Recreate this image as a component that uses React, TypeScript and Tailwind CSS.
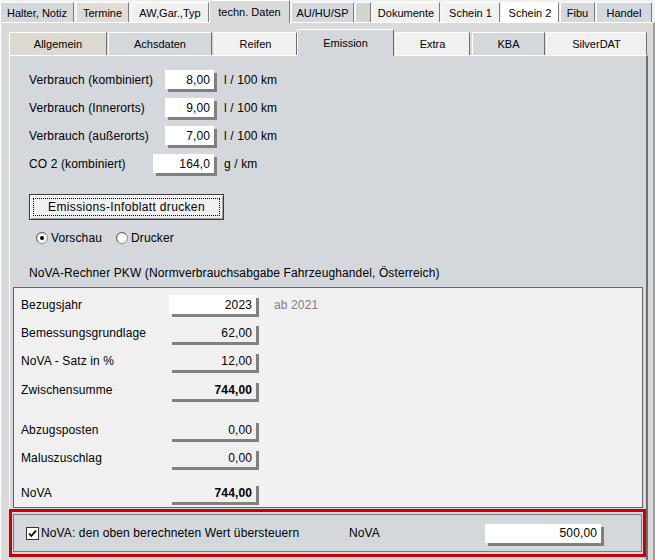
import React from 'react';

type TabDef = { label: string; cls: string; active?: boolean };

const topTabs: TabDef[] = [
  { label: 'Halter, Notiz', cls: 'w-[74px] bg-[#d4d8dc]' },
  { label: 'Termine', cls: 'ml-[2px] w-[53px] bg-[#e2ddd4]' },
  { label: 'AW,Gar.,Typ', cls: 'ml-[2px] w-[78px] bg-[#f0f0f0]' },
  { label: 'techn. Daten', cls: 'w-[81px] bg-[#dadada]', active: true },
  { label: 'AU/HU/SP', cls: 'ml-[1px] w-[63px] bg-[#d4d8dc]' },
  { label: '', cls: 'ml-[1px] w-[16px] bg-[#ced6ce]' },
  { label: 'Dokumente', cls: 'ml-[1px] w-[68px] bg-[#f0f0f0]' },
  { label: 'Schein 1', cls: 'ml-[1px] w-[59px] bg-[#f0f0f0]' },
  { label: 'Schein 2', cls: 'ml-[1px] w-[58px] bg-white' },
  { label: 'Fibu', cls: 'ml-[1px] w-[35px] bg-[#d4d8dc]' },
  { label: 'Handel', cls: 'ml-[1px] w-[56px] bg-[#d4d8dc]' },
];

const innerTabs: TabDef[] = [
  { label: 'Allgemein', cls: 'w-[98px] bg-[#ddd9d1]' },
  { label: 'Achsdaten', cls: 'ml-[1px] w-[104px] bg-[#d4d8dc]' },
  { label: 'Reifen', cls: 'ml-[2px] w-[83px] bg-[#f0f0f0]' },
  { label: 'Emission', cls: 'w-[97px] bg-[#d4d8dc]', active: true },
  { label: 'Extra', cls: 'ml-[1px] w-[75px] bg-[#f0f0f0]' },
  { label: 'KBA', cls: 'ml-[2px] w-[73px] bg-[#d4d8dc]' },
  { label: 'SilverDAT', cls: 'ml-[1px] w-[101px] bg-[#f0f0f0]' },
];

function TopTab({ tab }: { tab: TabDef }) {
  if (tab.active) {
    return (
      <div
        className={`relative z-10 -mb-px flex h-[23px] items-start justify-center border-l border-t border-r border-white border-r-[#7d7d7d] pt-[3px] text-[11px] ${tab.cls}`}
      >
        {tab.label}
      </div>
    );
  }
  return (
    <div
      className={`flex h-[20px] items-center justify-center border-l border-t border-r border-white border-r-[#7d7d7d] pt-[1px] text-[11px] ${tab.cls}`}
    >
      {tab.label}
    </div>
  );
}

function InnerTab({ tab }: { tab: TabDef }) {
  if (tab.active) {
    return (
      <div
        className={`relative z-10 -mb-px flex h-[27px] items-start justify-center border-l border-t border-r border-white border-r-[#6e6e6e] pt-[5px] text-[11px] ${tab.cls}`}
      >
        {tab.label}
      </div>
    );
  }
  return (
    <div
      className={`flex h-[23px] items-center justify-center border-l border-t border-r border-white border-r-[#6e6e6e] text-[11px] ${tab.cls}`}
    >
      {tab.label}
    </div>
  );
}

function Field({ value, width, white, bold }: { value: string; width: string; white?: boolean; bold?: boolean }) {
  return (
    <div
      className={`flex h-[19px] items-center justify-end pr-[4px] shadow-[3px_3px_0_#808080] ${width} ${white ? 'bg-white' : ''} ${bold ? 'font-bold' : ''}`}
    >
      {value}
    </div>
  );
}

function Radio({ checked }: { checked?: boolean }) {
  return (
    <svg width="12" height="12" viewBox="0 0 12 12">
      <circle cx="6" cy="6" r="5.5" fill="#ffffff" stroke="#8a8a8a" />
      <path d="M2.2 9.8 A5.3 5.3 0 0 1 9.8 2.2" fill="none" stroke="#5a5a5a" strokeWidth="0.8" />
      {checked && <circle cx="6" cy="6" r="2" fill="#000000" />}
    </svg>
  );
}

function Checkbox() {
  return (
    <svg width="13" height="13" viewBox="0 0 13 13">
      <rect x="0.5" y="0.5" width="12" height="12" fill="#ffffff" stroke="#333333" />
      <path d="M3 6.5 L5.3 9 L10 3.6" fill="none" stroke="#000000" strokeWidth="1.8" />
    </svg>
  );
}

const verbrauch = [
  { label: 'Verbrauch (kombiniert)', value: '8,00', unit: 'l / 100 km' },
  { label: 'Verbrauch (Innerorts)', value: '9,00', unit: 'l / 100 km' },
  { label: 'Verbrauch (außerorts)', value: '7,00', unit: 'l / 100 km' },
];

const novaRows = [
  { label: 'Bezugsjahr', value: '2023', white: true, note: 'ab 2021', mt: '' },
  { label: 'Bemessungsgrundlage', value: '62,00', mt: 'mt-[9px]' },
  { label: 'NoVA - Satz in %', value: '12,00', mt: 'mt-[9px]' },
  { label: 'Zwischensumme', value: '744,00', bold: true, mt: 'mt-[10px]' },
  { label: 'Abzugsposten', value: '0,00', mt: 'mt-[21px]' },
  { label: 'Maluszuschlag', value: '0,00', mt: 'mt-[9px]' },
  { label: 'NoVA', value: '744,00', bold: true, mt: 'mt-[16px]' },
];

export default function App() {
  return (
    <div className="flex h-[560px] w-[655px] flex-col overflow-hidden bg-[#f0f0f0] font-['Liberation_Sans',Arial,sans-serif] text-[12px] text-black">
      {/* Haupt-Reiter */}
      <div className="flex h-[22px] items-end">
        {topTabs.map((t, i) => (
          <TopTab key={i} tab={t} />
        ))}
      </div>

      <div className="flex flex-1 flex-col border-l border-t border-r-[2px] border-white border-r-[#a0a0a0] bg-[#dadada] pl-[8px] pr-[5px] pt-[6px]">
        {/* Unter-Reiter */}
        <div className="flex h-[26px] items-end">
          {innerTabs.map((t, i) => (
            <InnerTab key={i} tab={t} />
          ))}
        </div>

        <div className="flex flex-1 flex-col border-l border-t border-r-[2px] border-white border-r-[#6e6e6e] bg-[#d4d8dc] tracking-[0.12px]">
          <div className="ml-[19px] mt-[14px] flex flex-col gap-[9px]">
            {verbrauch.map((r) => (
              <div key={r.label} className="flex h-[19px] items-center">
                <span className="w-[136px]">{r.label}</span>
                <Field value={r.value} width="w-[49px]" white />
                <span className="ml-[10px]">{r.unit}</span>
              </div>
            ))}
            <div className="flex h-[19px] items-center">
              <span className="w-[124px]">CO 2 (kombiniert)</span>
              <Field value="164,0" width="w-[61px]" white />
              <span className="ml-[10px]">g / km</span>
            </div>
          </div>

          <button className="ml-[19px] mt-[21px] h-[26px] w-[195px] border border-[#3c3c3c] bg-[#f0f0f0] p-[3px] shadow-[inset_1px_1px_0_#ffffff,inset_-1px_-1px_0_#a0a0a0]">
            <span className="flex h-full items-center justify-center border border-dotted border-black text-[12px] tracking-[0.35px]">
              Emissions-Infoblatt drucken
            </span>
          </button>

          <div className="ml-[26px] mt-[11px] flex h-[14px] items-center">
            <Radio checked />
            <span className="ml-[3px]">Vorschau</span>
            <span className="ml-[14px] flex items-center">
              <Radio />
            </span>
            <span className="ml-[3px]">Drucker</span>
          </div>

          <div className="ml-[19px] mt-[21px] leading-[14px]">
            NoVA-Rechner PKW (Normverbrauchsabgabe Fahrzeughandel, Österreich)
          </div>

          {/* NoVA-Rechner */}
          <div className="ml-[3px] mt-[7px] flex h-[221px] w-[630px] flex-col border border-[#646464] bg-[#f0f0f0] pl-[7px] pt-[7px]">
            {novaRows.map((r) => (
              <div key={r.label} className={`flex h-[19px] items-center ${r.mt}`}>
                <span className="w-[148px]">{r.label}</span>
                <Field value={r.value} width="w-[87px]" white={r.white} bold={r.bold} />
                {r.note && <span className="ml-[18px] text-[#808080]">{r.note}</span>}
              </div>
            ))}
          </div>

          {/* Übersteuerung, rot markiert */}
          <div className="-ml-px mt-[1px] h-[48px] w-[637px] border-[3px] border-[#c80000] px-[1px] py-[2px]">
            <div className="flex h-full items-center border border-[#7a7a7a] bg-[#d4d8dc] pl-[12px]">
              <div className="flex w-[323px] items-center">
                <Checkbox />
                <span className="ml-[2px]">NoVA: den oben berechneten Wert übersteuern</span>
              </div>
              <span className="w-[136px]">NoVA</span>
              <Field value="500,00" width="w-[116px]" white />
            </div>
          </div>
        </div>
      </div>
    </div>
  );
}
